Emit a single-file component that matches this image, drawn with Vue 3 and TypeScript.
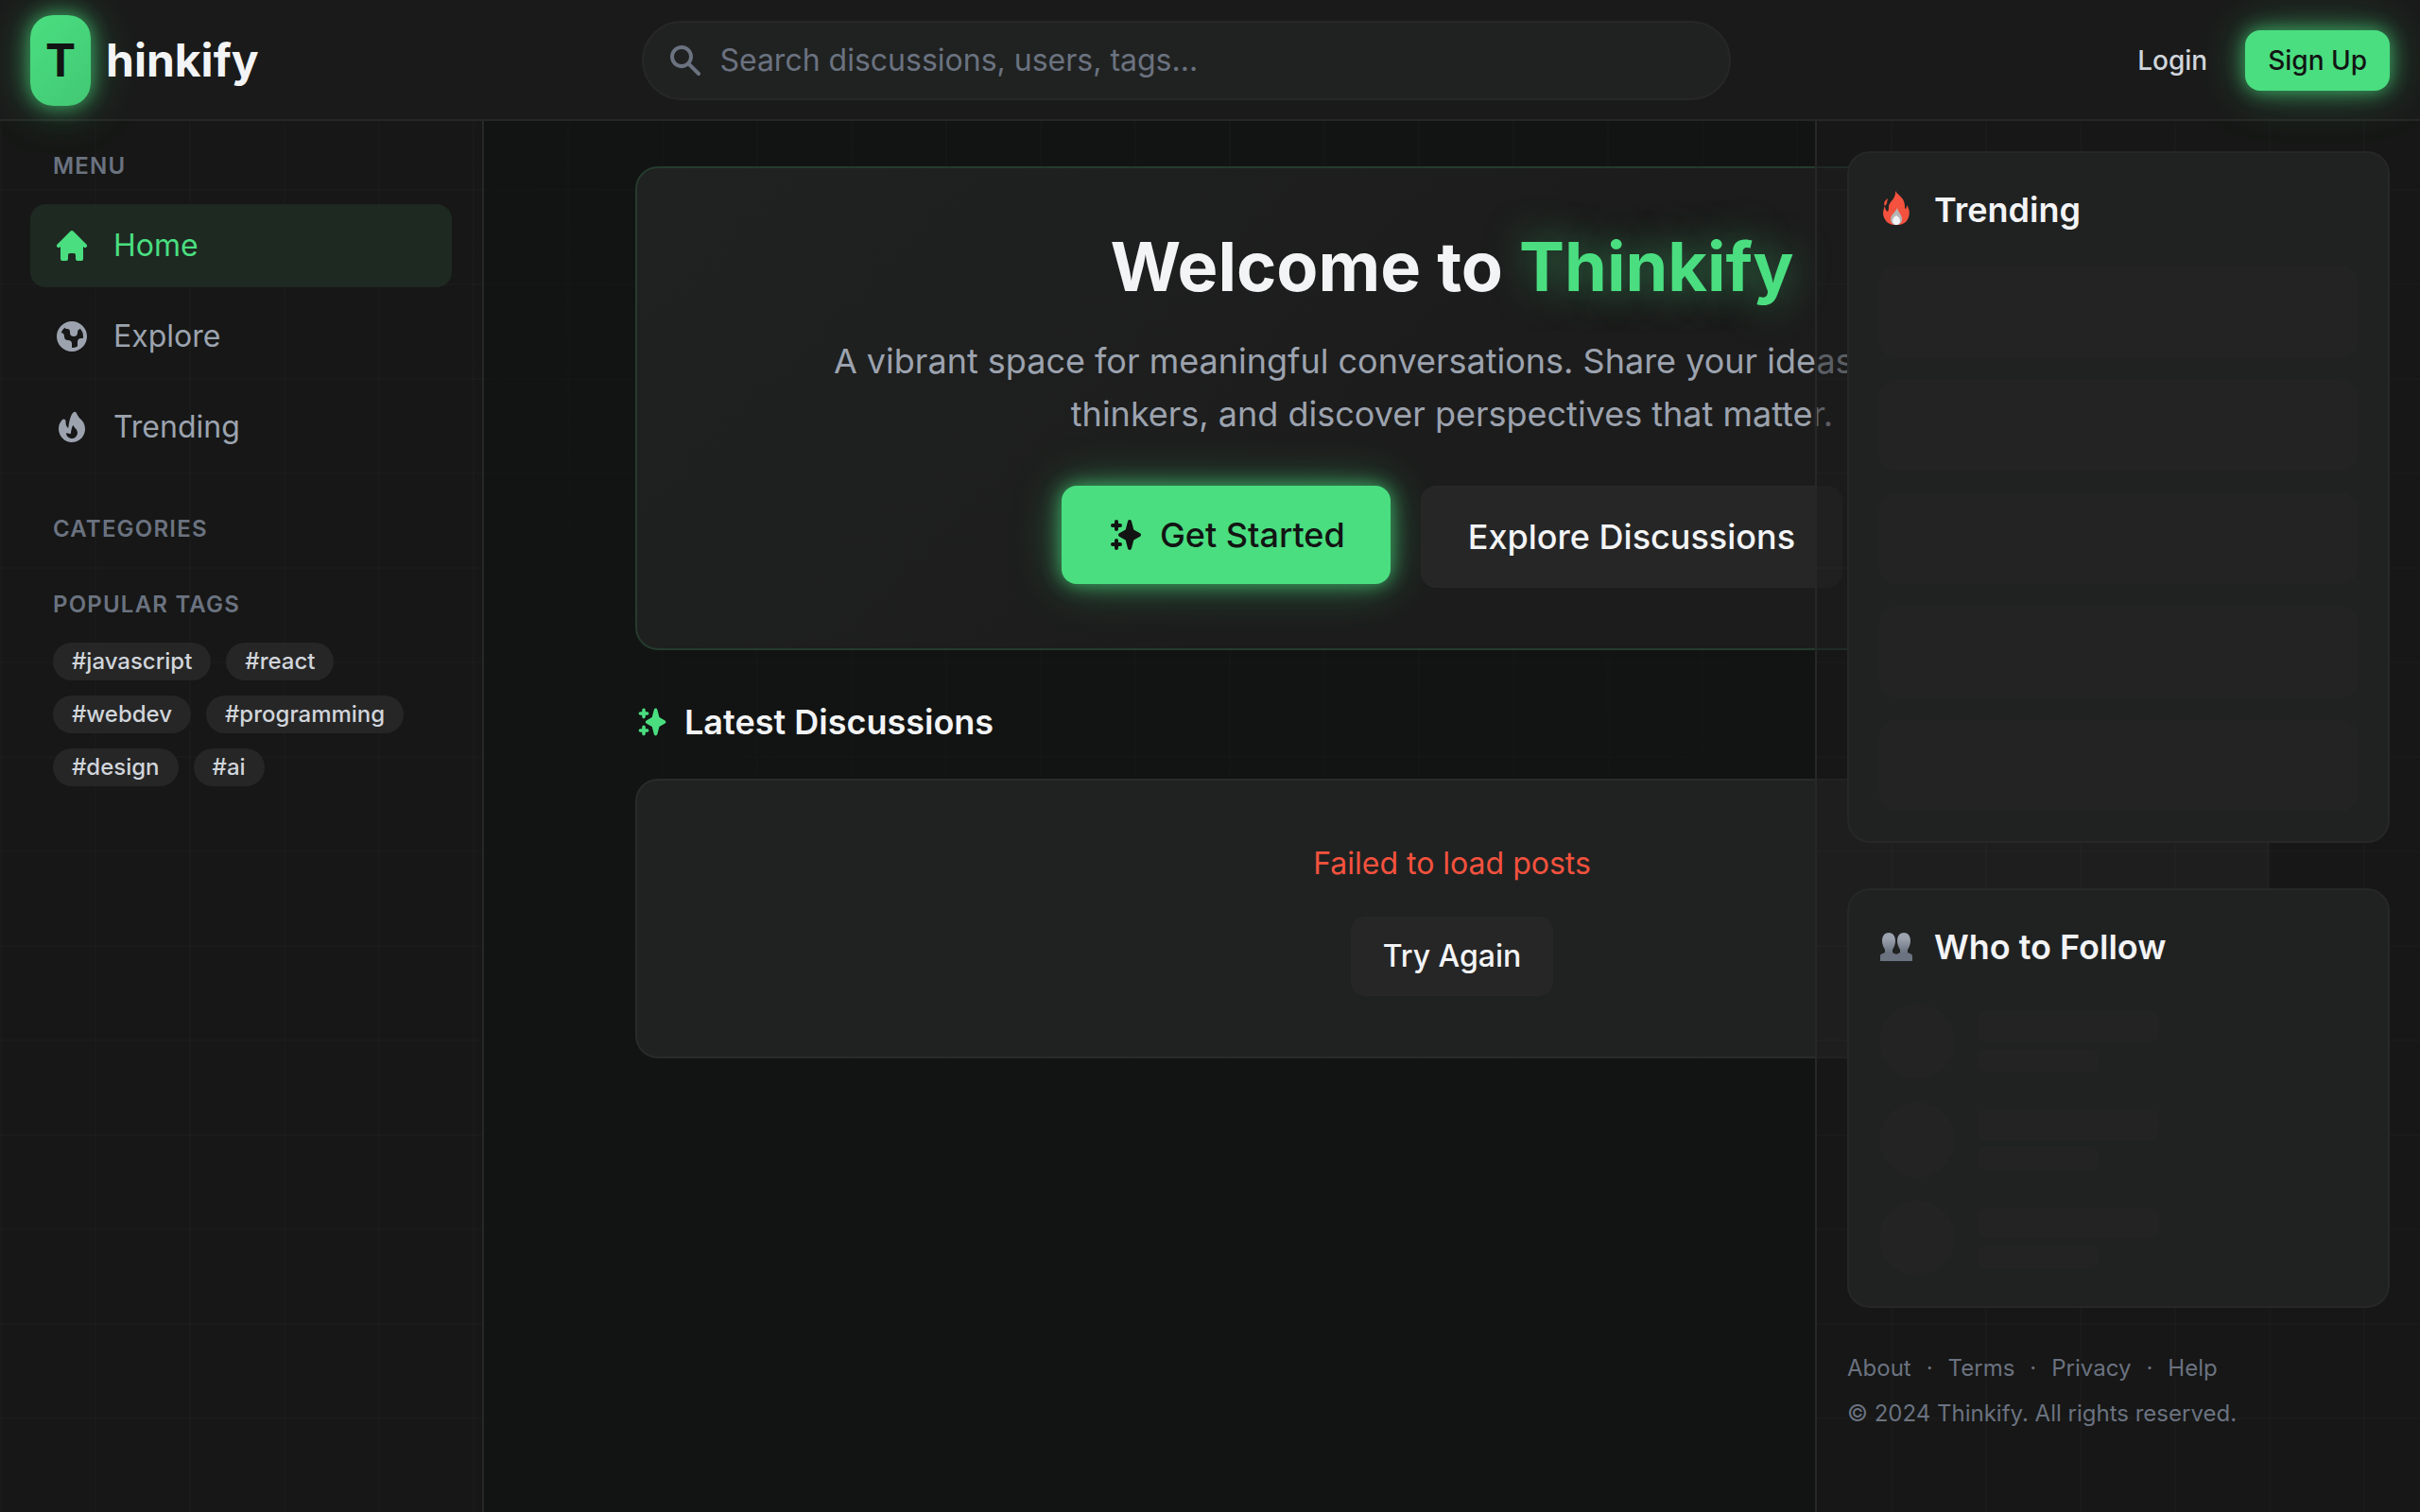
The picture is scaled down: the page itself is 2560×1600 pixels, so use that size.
<script setup lang="ts">
interface NavItem {
  label: string
  href: string
  icon: string
  active?: boolean
}

const icons = {
  search:
    'M8 4a4 4 0 100 8 4 4 0 000-8zM2 8a6 6 0 1110.89 3.476l4.817 4.817a1 1 0 01-1.414 1.414l-4.816-4.816A6 6 0 012 8z',
  home: 'M10.707 2.293a1 1 0 00-1.414 0l-7 7a1 1 0 001.414 1.414L4 10.414V17a1 1 0 001 1h2a1 1 0 001-1v-2a1 1 0 011-1h2a1 1 0 011 1v2a1 1 0 001 1h2a1 1 0 001-1v-6.586l.293.293a1 1 0 001.414-1.414l-7-7z',
  globe:
    'M10 18a8 8 0 100-16 8 8 0 000 16zM4.332 8.027a6.012 6.012 0 011.912-2.706C6.512 5.73 6.974 6 7.5 6A1.5 1.5 0 019 7.5V8a2 2 0 004 0 2 2 0 011.523-1.943A5.977 5.977 0 0116 10c0 .34-.028.675-.083 1H15a2 2 0 00-2 2v2.197A5.973 5.973 0 0110 16v-2a2 2 0 00-2-2 2 2 0 01-2-2 2 2 0 00-1.668-1.973z',
  fire: 'M12.395 2.553a1 1 0 00-1.45-.385c-.345.23-.614.558-.822.88-.214.33-.403.713-.57 1.116-.334.804-.614 1.768-.84 2.734a31.365 31.365 0 00-.613 3.58 2.64 2.64 0 01-.945-1.067c-.328-.68-.398-1.534-.398-2.654A1 1 0 005.05 6.05 6.981 6.981 0 003 11a7 7 0 1011.95-4.95c-.592-.591-.98-.985-1.348-1.467-.363-.476-.724-1.063-1.207-2.03zM12.12 15.12A3 3 0 017 13s.879.5 2.5.5c0-1 .5-4 1.25-4.5.5 1 .786 1.293 1.371 1.879A2.99 2.99 0 0113 13a2.99 2.99 0 01-.879 2.121z',
  sparkles:
    'M5 2a1 1 0 011 1v1h1a1 1 0 010 2H6v1a1 1 0 01-2 0V6H3a1 1 0 010-2h1V3a1 1 0 011-1zm0 10a1 1 0 011 1v1h1a1 1 0 110 2H6v1a1 1 0 11-2 0v-1H3a1 1 0 110-2h1v-1a1 1 0 011-1zM12 2a1 1 0 01.967.744L14.146 7.2 17.5 9.134a1 1 0 010 1.732l-3.354 1.935-1.18 4.455a1 1 0 01-1.933 0L9.854 12.8 6.5 10.866a1 1 0 010-1.732l3.354-1.935 1.18-4.455A1 1 0 0112 2z',
}

const navItems: NavItem[] = [
  { label: 'Home', href: '#home', icon: icons.home, active: true },
  { label: 'Explore', href: '#explore', icon: icons.globe },
  { label: 'Trending', href: '#trending', icon: icons.fire },
]

const tags: string[] = ['javascript', 'react', 'webdev', 'programming', 'design', 'ai']
const footerLinks: string[] = ['About', 'Terms', 'Privacy', 'Help']
</script>

<template>
  <div class="app">
    <header class="header">
      <a class="logo" href="#home">
        <span class="logo-mark glow">T</span>
        <span>hinkify</span>
      </a>
      <form class="search" role="search" @submit.prevent>
        <svg class="icon" viewBox="0 0 20 20" aria-hidden="true">
          <path :d="icons.search" fill-rule="evenodd" clip-rule="evenodd" />
        </svg>
        <input type="search" aria-label="Search" placeholder="Search discussions, users, tags..." />
      </form>
      <div class="auth">
        <button type="button" class="btn-login">Login</button>
        <button type="button" class="btn-signup glow">Sign Up</button>
      </div>
    </header>

    <div class="body">
      <aside class="sidebar">
        <nav class="section">
          <h2 class="section-title">Menu</h2>
          <ul class="nav">
            <li v-for="item in navItems" :key="item.label">
              <a :href="item.href" class="nav-link" :class="{ active: item.active }">
                <svg class="icon" viewBox="0 0 20 20" aria-hidden="true">
                  <path :d="item.icon" fill-rule="evenodd" clip-rule="evenodd" />
                </svg>
                <span>{{ item.label }}</span>
              </a>
            </li>
          </ul>
        </nav>
        <section class="section">
          <h2 class="section-title">Categories</h2>
        </section>
        <section class="section">
          <h2 class="section-title">Popular Tags</h2>
          <div class="tags">
            <a v-for="tag in tags" :key="tag" class="tag" :href="'#tag-' + tag">#{{ tag }}</a>
          </div>
        </section>
      </aside>

      <main class="main">
        <section class="hero">
          <h1>Welcome to <span class="accent">Thinkify</span></h1>
          <p>
            A vibrant space for meaningful conversations. Share your ideas, engage with thinkers, and discover
            perspectives that matter.
          </p>
          <div class="hero-actions">
            <button type="button" class="btn-start glow">
              <svg class="icon" viewBox="0 0 20 20" aria-hidden="true">
                <path :d="icons.sparkles" fill-rule="evenodd" clip-rule="evenodd" />
              </svg>
              Get Started
            </button>
            <button type="button" class="btn-dark large">Explore Discussions</button>
          </div>
        </section>

        <section class="latest">
          <h2 class="latest-title">
            <svg class="icon" viewBox="0 0 20 20" aria-hidden="true">
              <path :d="icons.sparkles" fill-rule="evenodd" clip-rule="evenodd" />
            </svg>
            Latest Discussions
          </h2>
          <div class="error-card">
            <p>Failed to load posts</p>
            <button type="button" class="btn-dark">Try Again</button>
          </div>
        </section>
      </main>

      <aside class="rail">
        <section class="card">
          <h2 class="card-title">
            <svg class="emoji" viewBox="0 0 42 42" aria-hidden="true">
              <path
                fill="#f4523e"
                d="M17 1c2 4 10 7 10 16 0 2 0 3 1 3 1-1 1-3 1-4 4 5 3 12 1 15-2 4-6 6-12 6S8 35 6 31c-3-5-2-10 0-14 0 3 1 5 3 6 1-2 1-4 1-6 1-5 8-8 7-16z"
              />
              <path fill="#f4523e" d="M9 9c-1 3 0 5-3 8-2-3 0-6 3-8z" />
              <path fill="#b5b5b5" d="M19 19c1 5 5 7 5 12 0 4-3 6-6 6s-6-2-6-6c0-5 5-7 7-12z" />
              <path fill="#f3f4f6" d="M18 27c2 1 4 3 4 6 0 2-2 4-4 4s-4-2-4-4c0-3 2-5 4-6z" />
            </svg>
            Trending
          </h2>
          <div class="trend-list">
            <div v-for="n in 5" :key="n" class="skeleton trend"></div>
          </div>
        </section>

        <section class="card">
          <h2 class="card-title">
            <svg class="emoji" viewBox="0 0 42 42" aria-hidden="true">
              <defs>
                <linearGradient id="bust" x1="0" y1="0" x2="0" y2="1">
                  <stop offset="0.2" stop-color="#9ca3af" />
                  <stop offset="0.7" stop-color="#6b7280" />
                </linearGradient>
              </defs>
              <path
                fill="url(#bust)"
                d="M10 6c5 0 7 4 7 9 0 4-2 7-3 9v3l4 2 4-2v-3c-1-2-3-5-3-9 0-5 2-9 7-9s7 4 7 9c0 4-2 7-3 9v3c2 1 5 1 5 4v5H1v-5c0-3 3-3 5-4v-3c-1-2-3-5-3-9 0-5 2-9 7-9z"
              />
            </svg>
            Who to Follow
          </h2>
          <div class="user-list">
            <div v-for="n in 3" :key="n" class="user">
              <div class="skeleton avatar"></div>
              <div class="user-lines">
                <div class="skeleton name"></div>
                <div class="skeleton handle"></div>
              </div>
            </div>
          </div>
        </section>

        <footer class="footer">
          <div class="footer-links">
            <template v-for="(link, i) in footerLinks" :key="link">
              <span v-if="i > 0">·</span>
              <a :href="'#' + link.toLowerCase()">{{ link }}</a>
            </template>
          </div>
          <p>© 2024 Thinkify. All rights reserved.</p>
        </footer>
      </aside>
    </div>
  </div>
</template>

<style>
body {
  background: #121413;
}
</style>

<style scoped>
* {
  box-sizing: border-box;
}

h1,
h2,
p,
ul {
  margin: 0;
  padding: 0;
}

ul {
  list-style: none;
}

a {
  color: inherit;
  text-decoration: none;
}

button,
input {
  font: inherit;
  color: inherit;
  border: 0;
  margin: 0;
}

button {
  cursor: pointer;
}

.app {
  min-height: 100vh;
  display: flex;
  flex-direction: column;
  background-color: #121413;
  background-image: radial-gradient(ellipse at top, transparent 20%, #121413 60%),
    linear-gradient(rgba(255, 255, 255, 0.01) 2px, transparent 2px),
    linear-gradient(90deg, rgba(255, 255, 255, 0.01) 2px, transparent 2px);
  background-size: auto, 100px 100px, 100px 100px;
  color: #f3f4f6;
  font-family: Inter, 'Liberation Sans', sans-serif;
  font-size: 32px;
  line-height: 48px;
}

.icon {
  width: 40px;
  height: 40px;
  fill: currentColor;
  flex: none;
}

.glow {
  box-shadow: 0 0 20px rgba(74, 222, 128, 0.7), 0 0 50px rgba(74, 222, 128, 0.4);
}

.header {
  position: relative;
  z-index: 3;
  display: flex;
  align-items: center;
  justify-content: space-between;
  gap: 64px;
  height: 128px;
  padding: 0 32px;
  background: #1a1a1a;
  box-shadow: inset 0 -2px #272727;
}

.logo {
  display: flex;
  align-items: center;
  gap: 16px;
  font-size: 48px;
  font-weight: 700;
  line-height: 64px;
}

.logo-mark {
  display: flex;
  align-items: center;
  justify-content: center;
  width: 64px;
  height: 96px;
  border-radius: 24px;
  color: #121413;
  background: linear-gradient(135deg, #4ade80, #42c874);
}

.search {
  flex: 1;
  max-width: 1152px;
  display: flex;
  align-items: center;
  gap: 16px;
  height: 84px;
  padding: 0 32px 0 24px;
  border: 2px solid #272727;
  border-radius: 42px;
  background: #202221;
  color: #6b7280;
}

.search input {
  flex: 1;
  min-width: 0;
  padding: 0;
  background: none;
  outline: none;
  color: #f3f4f6;
}

.search input::placeholder {
  color: #6b7280;
  opacity: 1;
}

.auth {
  display: flex;
  gap: 16px;
  font-size: 28px;
  font-weight: 500;
  line-height: 40px;
}

.auth button {
  padding: 12px 24px;
  border-radius: 16px;
}

.btn-login {
  background: none;
  color: #d1d5db;
}

.btn-signup {
  background: #4ade80;
  color: #121413;
}

.body {
  flex: 1;
  display: grid;
  grid-template-columns: 512px minmax(0, 1fr) 640px;
}

.sidebar,
.rail {
  display: flex;
  flex-direction: column;
  gap: 48px;
  padding: 32px;
  background-color: rgba(26, 26, 26, 0.5);
  background-image: linear-gradient(rgba(255, 255, 255, 0.01) 2px, transparent 2px),
    linear-gradient(90deg, rgba(255, 255, 255, 0.01) 2px, transparent 2px);
  background-size: 100px 100px;
  background-attachment: fixed;
}

.sidebar {
  grid-area: 1 / 1;
  border-right: 2px solid #272727;
}

.rail {
  grid-area: 1 / 3;
  z-index: 2;
  border-left: 2px solid #272727;
}

.section-title {
  padding: 0 24px;
  color: #6b7280;
  font-size: 24px;
  font-weight: 600;
  line-height: 32px;
  letter-spacing: 0.05em;
  text-transform: uppercase;
}

.nav {
  display: flex;
  flex-direction: column;
  gap: 8px;
  margin-top: 24px;
}

.nav-link {
  display: flex;
  align-items: center;
  gap: 24px;
  height: 88px;
  padding: 0 24px;
  border-radius: 16px;
  color: #9ca3af;
}

.nav-link.active {
  color: #4ade80;
  background: #1e2922;
}

.tags {
  display: flex;
  flex-wrap: wrap;
  gap: 16px;
  margin-top: 24px;
  padding: 0 24px;
}

.tag {
  padding: 4px 20px;
  border-radius: 20px;
  background: #262626;
  color: #d1d5db;
  font-size: 24px;
  font-weight: 500;
  line-height: 32px;
}

.main {
  grid-area: 1 / 2 / 2 / 4;
  width: 100%;
  max-width: 1792px;
  margin: 0 auto;
  padding: 48px 32px;
}

.hero {
  padding: 64px;
  border: 2px solid #253b2e;
  border-radius: 24px;
  background: linear-gradient(135deg, #202221, #1c1c1c 50%, #1c1c1c);
  text-align: center;
}

.hero h1 {
  font-size: 72px;
  font-weight: 700;
  line-height: 80px;
}

.accent {
  color: #4ade80;
  text-shadow: 0 0 40px rgba(74, 222, 128, 0.5);
}

.hero p {
  max-width: 1344px;
  margin: 32px auto 48px;
  color: #9ca3af;
  font-size: 36px;
  line-height: 56px;
}

.hero-actions {
  display: flex;
  justify-content: center;
  align-items: flex-start;
  gap: 32px;
}

.btn-start {
  display: flex;
  align-items: center;
  gap: 16px;
  padding: 24px 48px;
  border-radius: 16px;
  background: #4ade80;
  color: #121413;
  font-size: 36px;
  font-weight: 500;
  line-height: 56px;
}

.btn-dark {
  padding: 16px 32px;
  border: 2px solid #272727;
  border-radius: 16px;
  background: #262626;
  color: #f3f4f6;
  font-weight: 500;
}

.btn-dark.large {
  padding: 24px 48px;
  font-size: 36px;
  line-height: 56px;
}

.latest {
  margin-top: 48px;
}

.latest-title {
  display: flex;
  align-items: center;
  gap: 16px;
  font-size: 36px;
  font-weight: 600;
  line-height: 56px;
}

.latest-title .icon {
  width: 36px;
  height: 36px;
  color: #4ade80;
}

.error-card {
  display: flex;
  flex-direction: column;
  align-items: center;
  gap: 32px;
  margin-top: 32px;
  padding: 64px;
  border: 2px solid #2a2a2a;
  border-radius: 24px;
  background: #202221;
  color: #f4523e;
}

.card {
  padding: 32px;
  border: 2px solid #272727;
  border-radius: 24px;
  background: #202221;
}

.card-title {
  display: flex;
  align-items: center;
  gap: 16px;
  margin-bottom: 32px;
  font-size: 36px;
  font-weight: 600;
  line-height: 56px;
}

.emoji {
  width: 42px;
  height: 42px;
  flex: none;
}

.skeleton {
  background: #232323;
}

.trend-list,
.user-list {
  display: flex;
  flex-direction: column;
  gap: 24px;
}

.trend {
  height: 96px;
  border-radius: 16px;
}

.user {
  display: flex;
  align-items: center;
  gap: 24px;
}

.avatar {
  width: 80px;
  height: 80px;
  border-radius: 50%;
}

.user-lines {
  display: flex;
  flex-direction: column;
  gap: 8px;
}

.name {
  width: 192px;
  height: 32px;
  border-radius: 8px;
}

.handle {
  width: 128px;
  height: 24px;
  border-radius: 8px;
}

.footer {
  display: flex;
  flex-direction: column;
  gap: 16px;
  color: #6b7280;
  font-size: 24px;
  line-height: 32px;
}

.footer-links {
  display: flex;
  gap: 16px;
}
</style>
